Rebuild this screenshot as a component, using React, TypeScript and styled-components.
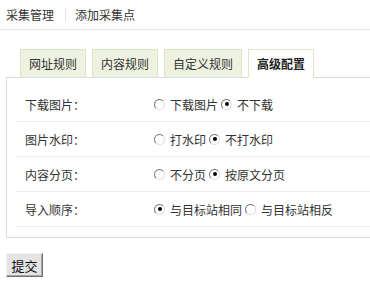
import React, { useState } from 'react';
import styled, { createGlobalStyle } from 'styled-components';

const GlobalStyle = createGlobalStyle`
  html, body {
    margin: 0;
    padding: 0;
    background: #fff;
    overflow: hidden;
  }
  body {
    font-family: "Noto Sans CJK SC", "DejaVu Sans", sans-serif;
    font-size: 12px;
    color: #333;
  }
`

const Page = styled.div`
  width: 370px;
  height: 285px;
  overflow: hidden;
`

const Header = styled.div`
  display: flex;
  align-items: center;
  height: 29px;
  padding-left: 6px;
  border-bottom: 1px solid #e8e8e8;
`

const HeaderLink = styled.span`
  color: #333;
  line-height: 16px;
`

const Divider = styled.span`
  width: 1px;
  height: 13px;
  background: #eadede;
  margin: 0 9px 0 11px;
`

const Body = styled.div`
  padding: 19px 0 0 6px;
`

const TabList = styled.div`
  display: flex;
  gap: 6px;
  padding-left: 14px;
  margin-bottom: -1px;
  position: relative;
`

const Tab = styled.div<{ $active?: boolean }>`
  height: 27px;
  padding: 0 8px;
  display: flex;
  align-items: center;
  border: 1px solid #dde6c6;
  border-bottom: 1px solid ${p => (p.$active ? '#fff' : '#dde2e6')};
  background: ${p => (p.$active ? '#fff' : '#eef2e1')};
  font-weight: ${p => (p.$active ? 'bold' : 'normal')};
  color: ${p => (p.$active ? '#222' : '#333')};
  cursor: pointer;
`

const Panel = styled.div`
  width: 380px;
  border: 1px solid #dcdcdc;
  padding: 9px 0 10px 9px;
`

const Row = styled.div`
  display: grid;
  grid-template-columns: 138px 1fr;
  align-items: center;
  height: 34px;
  border-bottom: 1px solid #ececec;
`

const Label = styled.span`
  padding-left: 9px;
  color: #333;
`

const Options = styled.div`
  display: flex;
  align-items: center;
`

const Option = styled.label`
  display: flex;
  align-items: center;
  margin-right: 3px;
  cursor: pointer;
`

const RadioDot = styled.span<{ $checked?: boolean }>`
  width: 9px;
  height: 9px;
  border-radius: 50%;
  border: 1px solid #a8a8a8;
  border-top-color: #6e6e6e;
  border-left-color: #7a7a7a;
  border-right-color: #dcdcdc;
  border-bottom-color: #e2e2e2;
  background: #fff;
  margin-right: 5px;
  display: flex;
  align-items: center;
  justify-content: center;

  &::after {
    content: '';
    width: 4px;
    height: 4px;
    border-radius: 50%;
    background: ${p => (p.$checked ? '#000' : 'transparent')};
  }
`

const SubmitButton = styled.button`
  margin-top: 15px;
  height: 24px;
  width: 37px;
  padding: 0;
  font-family: "Noto Sans CJK SC", sans-serif;
  font-size: 13px;
  color: #111;
  background: #e3e3e3;
  border: 1px solid;
  border-color: #f4f4f4 #707070 #707070 #f4f4f4;
  box-shadow: inset -1px -1px 0 #a8a8a8;
`

const tabs = ['网址规则', '内容规则', '自定义规则', '高级配置']

const settings = [
  { label: '下载图片：', options: ['下载图片', '不下载'], value: 1 },
  { label: '图片水印：', options: ['打水印', '不打水印'], value: 1 },
  { label: '内容分页：', options: ['不分页', '按原文分页'], value: 1 },
  { label: '导入顺序：', options: ['与目标站相同', '与目标站相反'], value: 0 },
]

function App() {
  const [activeTab, setActiveTab] = useState(3)
  const [values, setValues] = useState(settings.map(s => s.value))

  return (
    <Page>
      <GlobalStyle />
      <Header>
        <HeaderLink>采集管理</HeaderLink>
        <Divider />
        <HeaderLink>添加采集点</HeaderLink>
      </Header>
      <Body>
        <TabList>
          {tabs.map((t, i) => (
            <Tab key={t} $active={i === activeTab} onClick={() => setActiveTab(i)}>
              {t}
            </Tab>
          ))}
        </TabList>
        <Panel>
          {settings.map((s, row) => (
            <Row key={s.label}>
              <Label>{s.label}</Label>
              <Options>
                {s.options.map((o, i) => (
                  <Option
                    key={o}
                    onClick={() => setValues(v => v.map((x, r) => (r === row ? i : x)))}
                  >
                    <RadioDot $checked={values[row] === i} />
                    {o}
                  </Option>
                ))}
              </Options>
            </Row>
          ))}
        </Panel>
        <SubmitButton>提交</SubmitButton>
      </Body>
    </Page>
  )
}

export default App
